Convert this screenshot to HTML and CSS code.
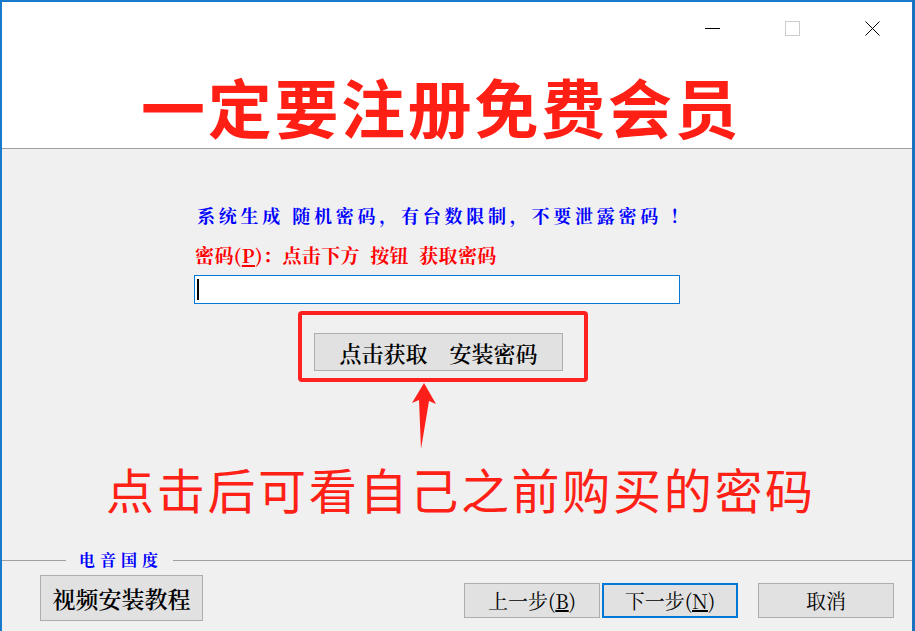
FILE: index.html
```html
<!DOCTYPE html>
<html lang="zh-CN">
<head>
<meta charset="utf-8">
<title>安装向导</title>
<link rel="stylesheet" href="styles.css">
</head>
<body>
<div class="window">
  <header class="header">
    <div class="caption">
      <svg class="cap-icon" width="15" height="15" viewBox="0 0 15 15"><line x1="0" y1="7.5" x2="15" y2="7.5" stroke="#000" stroke-width="1"/></svg>
      <svg class="cap-icon" width="15" height="15" viewBox="0 0 15 15"><rect x="0.5" y="0.5" width="14" height="14" fill="none" stroke="#cccccc" stroke-width="1"/></svg>
      <svg class="cap-icon" width="15" height="15" viewBox="0 0 15 15"><path d="M0.5 0.5 L14.5 14.5 M14.5 0.5 L0.5 14.5" stroke="#000" stroke-width="1" fill="none"/></svg>
    </div>
    <h1 class="headline">一定要注册免费会员</h1>
  </header>
  <main class="body">
    <section class="form">
      <p class="notice">系统生成 随机密码，有台数限制，不要泄露密码 ！</p>
      <p class="pw-label">密码(<u>P</u>)：点击下方 按钮 获取密码</p>
      <div class="pw-input"><span class="caret"></span></div>
      <div class="get-wrap">
        <button class="btn get-btn">点击获取　安装密码</button>
        <span class="annot-box"></span>
        <svg class="annot-arrow" width="26" height="68" viewBox="0 0 26 68"><polygon points="13,1 25,22 18,19 10,67 8,18 1,21" fill="#ff1f1a"/></svg>
      </div>
    </section>
    <p class="hint">点击后可看自己之前购买的密码</p>
    <div class="brand-row">
      <span class="rule rule-left"></span>
      <span class="brand">电音国度</span>
      <span class="rule rule-right"></span>
    </div>
    <div class="footer">
      <button class="btn video-btn">视频安装教程</button>
      <div class="nav">
        <button class="btn nav-btn">上一步(<u>B</u>)</button>
        <button class="btn nav-btn default">下一步(<u>N</u>)</button>
        <button class="btn nav-btn cancel">取消</button>
      </div>
    </div>
  </main>
</div>
</body>
</html>
```

FILE: styles.css
```css
* {
  box-sizing: border-box;
  margin: 0;
  padding: 0;
}

html, body {
  width: 915px;
  height: 631px;
  overflow: hidden;
}

body {
  font-family: "Noto Sans CJK SC", sans-serif;
  background: #f0f0f0;
}

.window {
  width: 915px;
  height: 631px;
  border-top: 2px solid #1979ca;
  border-left: 2px solid #1979ca;
  border-right: 3px solid #1a72c0;
  display: flex;
  flex-direction: column;
  background: #f0f0f0;
}

.header {
  height: 147px;
  background: #ffffff;
  border-bottom: 1px solid #a0a0a0;
}

.caption {
  height: 38px;
  padding-top: 19px;
  padding-right: 32px;
  display: flex;
  justify-content: flex-end;
  gap: 65px;
}

.cap-icon {
  display: block;
}

.headline {
  margin-top: 33px;
  padding-left: 139px;
  font-size: 64px;
  line-height: 64px;
  font-weight: 700;
  letter-spacing: 2.7px;
  color: #ff1f14;
}

.body {
  flex: 1;
  display: flex;
  flex-direction: column;
}

.form {
  margin-left: 192px;
  display: flex;
  flex-direction: column;
  align-items: flex-start;
}

.notice,
.pw-label,
.brand {
  font-family: "Noto Serif CJK SC", "AR PL UMing CN", "Noto Sans CJK SC", serif;
  font-weight: 700;
}

.notice {
  margin-top: 56px;
  padding-left: 3px;
  font-size: 18px;
  line-height: 20px;
  letter-spacing: 3.75px;
  color: #0000ff;
}

.pw-label {
  margin-top: 20px;
  padding-left: 1px;
  font-size: 19px;
  line-height: 20px;
  letter-spacing: 0.4px;
  word-spacing: 5px;
  color: #ff0000;
}

.pw-label u {
  text-decoration-thickness: 2px;
  text-underline-offset: 2px;
}

.pw-input {
  margin-top: 10px;
  width: 486px;
  height: 29px;
  background: #ffffff;
  border: 1px solid #0078d7;
  display: flex;
  align-items: center;
  padding-left: 2px;
}

.caret {
  display: block;
  width: 2px;
  height: 21px;
  background: #000;
}

.get-wrap {
  position: relative;
  margin-top: 29px;
  margin-left: 120px;
}

.btn {
  font-family: "Noto Serif CJK SC", "AR PL UMing CN", "Noto Sans CJK SC", serif;
  background: #e1e1e1;
  border: 1px solid #adadad;
  color: #000;
  display: flex;
  align-items: center;
  justify-content: center;
}

.get-btn {
  width: 249px;
  height: 38px;
  font-size: 22px;
  font-weight: 600;
}

.annot-box {
  position: absolute;
  left: -16px;
  top: -22px;
  width: 290px;
  height: 71px;
  border: 4px solid #ff2020;
  border-radius: 4px;
}

.annot-arrow {
  position: absolute;
  left: 97px;
  top: 49px;
}

.hint {
  margin-top: 89px;
  margin-left: 104px;
  font-size: 48px;
  line-height: 56px;
  letter-spacing: 2.7px;
  color: #ff2016;
}

.brand-row {
  margin-top: 34px;
  height: 20px;
  display: flex;
  align-items: center;
}

.rule {
  height: 1px;
  background: #a0a0a0;
}

.rule-left {
  width: 64px;
}

.rule-right {
  flex: 1;
}

.brand {
  margin: 0 10px 0 13px;
  font-size: 16px;
  line-height: 20px;
  letter-spacing: 5px;
  color: #0000ff;
}

.footer {
  margin-top: 5px;
  padding-left: 38px;
  padding-right: 18px;
  display: flex;
  justify-content: space-between;
  align-items: flex-start;
}

.video-btn {
  width: 163px;
  height: 46px;
  font-size: 23px;
  font-weight: 600;
}

.nav {
  margin-top: 8px;
  display: flex;
}

.nav-btn {
  width: 136px;
  height: 35px;
  font-size: 20px;
}

.nav-btn.default {
  margin-left: 2px;
  border: 2px solid #0078d7;
}

.nav-btn.cancel {
  margin-left: 20px;
}
```
